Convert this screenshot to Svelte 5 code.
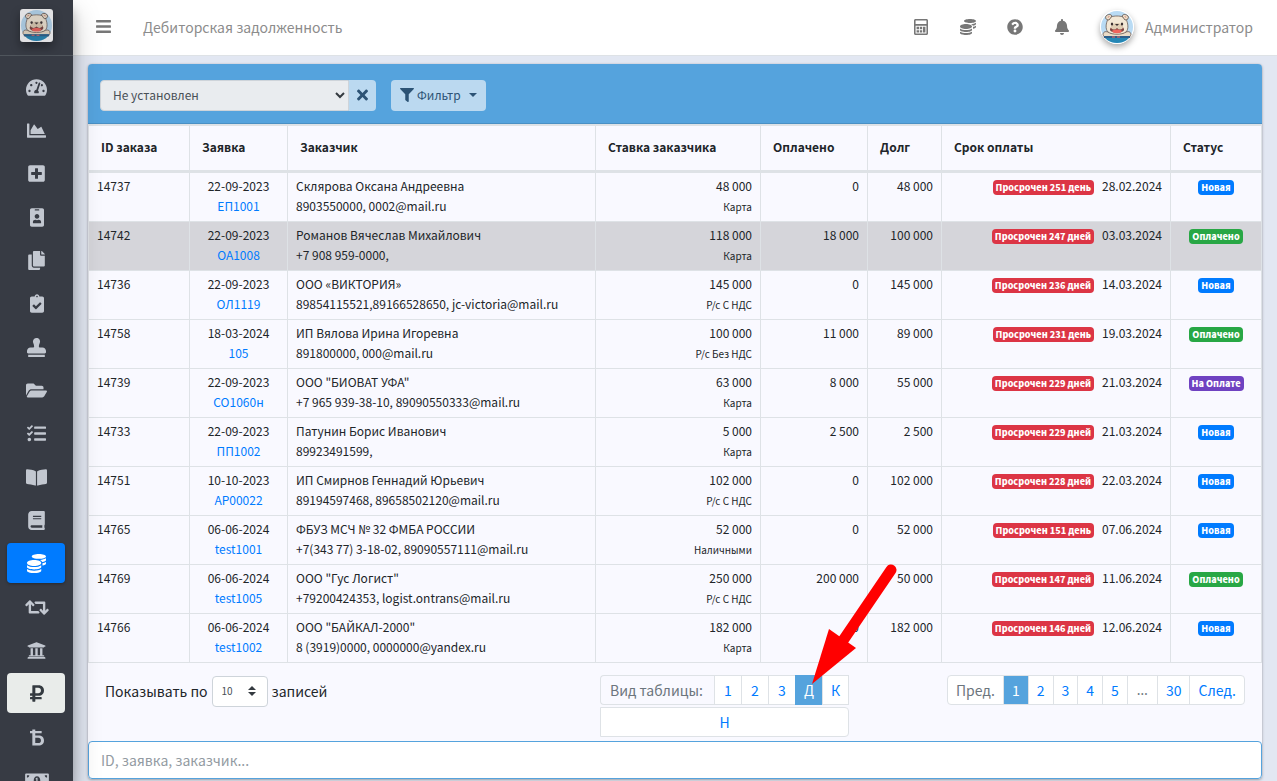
<script>
	let status = 'Не установлен';
	let perPage = '10';
	let search = '';

	const icons = {
		gauge: [576, 'M288 32C128.94 32 0 160.94 0 320c0 52.8 14.25 102.26 39.06 144.8 5.61 9.62 16.3 15.2 27.44 15.2h443c11.14 0 21.83-5.58 27.44-15.2C561.75 422.26 576 372.8 576 320c0-159.06-128.94-288-288-288zm0 64c14.71 0 26.58 10.13 30.32 23.65-1.11 2.26-2.64 4.23-3.45 6.67l-9.22 27.67c-5.13 3.49-10.97 6.01-17.64 6.01-17.67 0-32-14.33-32-32S270.33 96 288 96zM96 384c-17.67 0-32-14.33-32-32s14.33-32 32-32 32 14.33 32 32-14.33 32-32 32zm48-160c-17.67 0-32-14.33-32-32s14.33-32 32-32 32 14.33 32 32-14.33 32-32 32zm246.77-72.41l-61.33 184C343.13 347.33 352 364.54 352 384c0 11.72-3.38 22.55-8.88 32H232.88c-5.5-9.45-8.88-20.28-8.88-32 0-33.94 26.5-61.43 59.9-63.59l61.34-184.01c4.17-12.56 17.73-19.45 30.36-15.17 12.57 4.19 19.35 17.79 15.17 30.36zm14.66 57.2l15.52-46.55c3.47-1.29 7.13-2.23 11.05-2.23 17.67 0 32 14.33 32 32s-14.33 32-32 32c-11.38-.01-20.89-6.28-26.57-15.22zM480 384c-17.67 0-32-14.33-32-32s14.33-32 32-32 32 14.33 32 32-14.33 32-32 32z'],
		chart: [512, 'M500 384c6.6 0 12 5.4 12 12v40c0 6.6-5.4 12-12 12H12c-6.6 0-12-5.4-12-12V76c0-6.6 5.4-12 12-12h40c6.6 0 12 5.4 12 12v308h436zM372.7 159.5L288 216l-85.3-113.7c-5.1-6.8-15.5-6.3-19.9 1L96 248v104h384l-89.9-187.8c-3.2-6.5-11.4-8.7-17.4-4.7z'],
		plus: [448, 'M400 32H48C21.5 32 0 53.5 0 80v352c0 26.5 21.5 48 48 48h352c26.5 0 48-21.5 48-48V80c0-26.5-21.5-48-48-48zm-32 252c0 6.6-5.4 12-12 12h-92v92c0 6.6-5.4 12-12 12h-56c-6.6 0-12-5.4-12-12v-92H92c-6.6 0-12-5.4-12-12v-56c0-6.6 5.4-12 12-12h92v-92c0-6.6 5.4-12 12-12h56c6.6 0 12 5.4 12 12v92h92c6.6 0 12 5.4 12 12v56z'],
		badge: [384, 'M336 0H48C21.5 0 0 21.5 0 48v416c0 26.5 21.5 48 48 48h288c26.5 0 48-21.5 48-48V48c0-26.5-21.5-48-48-48zM144 32h96c8.8 0 16 7.2 16 16s-7.2 16-16 16h-96c-8.8 0-16-7.2-16-16s7.2-16 16-16zm48 128c35.3 0 64 28.7 64 64s-28.7 64-64 64-64-28.7-64-64 28.7-64 64-64zm112 236.8c0 10.6-10 19.2-22.4 19.2H102.4C90 416 80 407.4 80 396.8v-19.2c0-31.8 30.1-57.6 67.2-57.6h5c12.3 5.1 25.7 8 39.8 8s27.6-2.9 39.8-8h5c37.1 0 67.2 25.8 67.2 57.6v19.2z'],
		copy: [448, 'M320 448v40c0 13.255-10.745 24-24 24H24c-13.255 0-24-10.745-24-24V120c0-13.255 10.745-24 24-24h72v296c0 30.879 25.121 56 56 56h168zm0-344V0H152c-13.255 0-24 10.745-24 24v368c0 13.255 10.745 24 24 24h272c13.255 0 24-10.745 24-24V128H344c-13.2 0-24-10.8-24-24zm120.971-31.029L375.029 7.029A24 24 0 0 0 358.059 0H352v96h96v-6.059a24 24 0 0 0-7.029-16.97z'],
		clipboard: [384, 'M336 64h-80c0-35.3-28.7-64-64-64s-64 28.7-64 64H48C21.5 64 0 85.5 0 112v352c0 26.5 21.5 48 48 48h288c26.5 0 48-21.5 48-48V112c0-26.5-21.5-48-48-48zM192 40c13.3 0 24 10.7 24 24s-10.7 24-24 24-24-10.7-24-24 10.7-24 24-24zm121.2 231.8l-143 141.8c-4.7 4.7-12.3 4.6-17-.1l-82.6-83.3c-4.7-4.7-4.6-12.3.1-17L99.1 285c4.7-4.7 12.3-4.6 17 .1l46 46.4 106-105.2c4.7-4.7 12.3-4.6 17 .1l28.2 28.4c4.7 4.8 4.6 12.3-.1 17z'],
		stamp: [512, 'M32 512h448v-64H32v64zm384-256h-66.56c-16.26 0-29.44-13.18-29.44-29.44v-9.46c0-27.37 8.88-53.41 21.46-77.72 9.11-17.61 12.9-38.39 9.05-60.42-6.77-38.78-38.47-70.7-77.26-77.45C212.62-9.04 160 37.33 160 96c0 14.16 3.12 27.54 8.69 39.58C182.02 164.43 192 194.7 192 226.49v.07c0 16.26-13.18 29.44-29.44 29.44H96c-53.02 0-96 42.98-96 96v32c0 17.67 14.33 32 32 32h448c17.67 0 32-14.33 32-32v-32c0-53.02-42.98-96-96-96z'],
		folder: [576, 'M572.694 292.093L500.27 416.248A63.997 63.997 0 0 1 444.989 448H45.025c-18.523 0-30.064-20.093-20.731-36.093l72.424-124.155A64 64 0 0 1 152 256h399.964c18.523 0 30.064 20.093 20.73 36.093zM152 224h328v-48c0-26.51-21.49-48-48-48H272l-64-64H48C21.49 64 0 85.49 0 112v278.046l69.077-118.418C86.214 242.25 117.989 224 152 224z'],
		tasks: [512, 'M139.61 35.5a12 12 0 0 0-17 0L58.93 98.81l-22.7-22.12a12 12 0 0 0-17 0L3.53 92.41a12 12 0 0 0 0 17l47.59 47.4a12.78 12.78 0 0 0 17.61 0l15.59-15.62L156.52 69a12.09 12.09 0 0 0 .09-17zm0 159.19a12 12 0 0 0-17 0l-63.68 63.72-22.7-22.1a12 12 0 0 0-17 0L3.53 252a12 12 0 0 0 0 17L51 316.5a12.77 12.77 0 0 0 17.6 0l15.7-15.69 72.2-72.22a12 12 0 0 0 .09-16.9zM64 368c-26.49 0-48.59 21.5-48.59 48S37.53 464 64 464a48 48 0 0 0 0-96zm432 16H208a16 16 0 0 0-16 16v32a16 16 0 0 0 16 16h288a16 16 0 0 0 16-16v-32a16 16 0 0 0-16-16zm0-320H208a16 16 0 0 0-16 16v32a16 16 0 0 0 16 16h288a16 16 0 0 0 16-16V80a16 16 0 0 0-16-16zm0 160H208a16 16 0 0 0-16 16v32a16 16 0 0 0 16 16h288a16 16 0 0 0 16-16v-32a16 16 0 0 0-16-16z'],
		bookOpen: [576, 'M542.22 32.05c-54.8 3.11-163.72 14.43-230.96 55.59-4.64 2.84-7.27 7.89-7.27 13.17v363.87c0 11.55 12.63 18.85 23.28 13.49 69.18-34.82 169.23-44.32 218.7-46.92 16.89-.89 30.02-14.43 30.02-30.66V62.75c.01-17.71-15.35-31.74-33.77-30.7zM264.73 87.64C197.5 46.48 88.58 35.17 33.78 32.05 15.36 31.01 0 45.04 0 62.75V400.6c0 16.24 13.13 29.78 30.02 30.66 49.49 2.6 149.59 12.11 218.77 46.95 10.62 5.35 23.21-1.94 23.21-13.46V100.63c0-5.29-2.62-10.14-7.27-12.99z'],
		book: [448, 'M448 360V24c0-13.3-10.7-24-24-24H96C43 0 0 43 0 96v320c0 53 43 96 96 96h328c13.3 0 24-10.7 24-24v-16c0-7.5-3.5-14.3-8.9-18.7-4.2-15.4-4.2-59.3 0-74.7 5.4-4.3 8.9-11.1 8.9-18.6zM128 134c0-3.3 2.7-6 6-6h212c3.3 0 6 2.7 6 6v20c0 3.3-2.7 6-6 6H134c-3.3 0-6-2.7-6-6v-20zm0 64c0-3.3 2.7-6 6-6h212c3.3 0 6 2.7 6 6v20c0 3.3-2.7 6-6 6H134c-3.3 0-6-2.7-6-6v-20zm253.4 250H96c-17.7 0-32-14.3-32-32 0-17.6 14.4-32 32-32h285.4c-1.9 17.1-1.9 46.9 0 64z'],
		coins: [512, 'M0 405.3V448c0 35.3 86 64 192 64s192-28.7 192-64v-42.7C342.7 434.4 267.2 448 192 448S41.3 434.4 0 405.3zM320 128c106 0 192-28.7 192-64S426 0 320 0 128 28.7 128 64s86 64 192 64zM0 300.4V352c0 35.3 86 64 192 64s192-28.7 192-64v-51.6c-41.3 34-116.9 51.6-192 51.6S41.3 334.4 0 300.4zm416 11c57.3-11.1 96-31.7 96-55.4v-42.7c-23.2 16.4-57.3 27.6-96 34.5v63.6zM192 160C86 160 0 195.8 0 240s86 80 192 80 192-35.8 192-80-86-80-192-80zm219.3 56.3c60-10.8 100.7-32 100.7-56.3v-42.7c-35.5 25.1-96.5 38.6-160.7 41.8 29.5 14.3 51.2 33.5 60 57.2z'],
		retweet: [640, 'M629.657 343.598L528.971 444.284c-9.373 9.372-24.568 9.372-33.941 0L394.343 343.598c-9.373-9.373-9.373-24.569 0-33.941l10.823-10.823c9.562-9.562 25.133-9.34 34.419.492L480 342.118V160H292.451a24.005 24.005 0 0 1-16.971-7.029l-16-16C244.361 121.851 255.069 96 276.451 96H520c13.255 0 24 10.745 24 24v222.118l40.416-42.792c9.285-9.831 24.856-10.054 34.419-.492l10.823 10.823c9.372 9.372 9.372 24.569-.001 33.941zm-265.138 15.431A23.999 23.999 0 0 0 347.548 352H160V169.881l40.416 42.792c9.286 9.831 24.856 10.054 34.419.491l10.822-10.822c9.373-9.373 9.373-24.569 0-33.941L144.971 67.716c-9.373-9.373-24.569-9.373-33.941 0L10.343 168.402c-9.373 9.373-9.373 24.569 0 33.941l10.822 10.822c9.562 9.562 25.133 9.34 34.419-.491L96 169.881V392c0 13.255 10.745 24 24 24h243.549c21.382 0 32.09-25.851 16.971-40.971l-16.001-16z'],
		bank: [512, 'M496 128v16a8 8 0 0 1-8 8h-24v12c0 6.627-5.373 12-12 12H60c-6.627 0-12-5.373-12-12v-12H24a8 8 0 0 1-8-8v-16a8 8 0 0 1 4.941-7.392l232-88a7.996 7.996 0 0 1 6.118 0l232 88A8 8 0 0 1 496 128zm-24 304H40c-13.255 0-24 10.745-24 24v16a8 8 0 0 0 8 8h464a8 8 0 0 0 8-8v-16c0-13.255-10.745-24-24-24zM96 192v192H60c-6.627 0-12 5.373-12 12v20h416v-20c0-6.627-5.373-12-12-12h-36V192h-64v192h-64V192h-64v192h-64V192H96z'],
		ruble: [384, 'M239.36 320C324.48 320 384 260.542 384 175.071S324.48 32 239.36 32H76c-6.627 0-12 5.373-12 12v206.632H12c-6.627 0-12 5.373-12 12V308c0 6.627 5.373 12 12 12h52v32H12c-6.627 0-12 5.373-12 12v40c0 6.627 5.373 12 12 12h52v52c0 6.627 5.373 12 12 12h58.56c6.627 0 12-5.373 12-12v-52H308c6.627 0 12-5.373 12-12v-40c0-6.627-5.373-12-12-12H146.56v-32h92.8zm-92.8-219.252h78.72c46.72 0 74.88 29.11 74.88 74.323 0 45.832-28.16 75.561-76.16 75.561h-77.44V100.748z'],
		yat: [384, 'M64 36h80v44h176v62H144v58h90c92 0 150 50 150 138s-58 138-150 138H64V142H0V80h64zM144 266v144h84c44 0 72-24 72-72s-28-72-72-72z'],
		money: [640, 'M608 64H32C14 64 0 78 0 96v320c0 18 14 32 32 32h576c18 0 32-14 32-32V96c0-18-14-32-32-32zM48 400v-64c35 0 64 29 64 64zm0-224v-64h64c0 35-29 64-64 64zm272 192c-53 0-88-50-88-112s35-112 88-112 88 50 88 112-35 112-88 112zm-34-62v28h68v-28h-20V180h-24c-6 12-16 18-28 20v24h20v82zm306 94h-64c0-35 29-64 64-64zm0-224c-35 0-64-29-64-64h64z'],
		bars: [448, 'M16 132h416c9 0 16-7 16-16V76c0-9-7-16-16-16H16C7 60 0 67 0 76v40c0 9 7 16 16 16zm0 160h416c9 0 16-7 16-16v-40c0-9-7-16-16-16H16c-9 0-16 7-16 16v40c0 9 7 16 16 16zm0 160h416c9 0 16-7 16-16v-40c0-9-7-16-16-16H16c-9 0-16 7-16 16v40c0 9 7 16 16 16z'],
		calculator: [448, 'M400 0H48C22 0 0 22 0 48v416c0 26 22 48 48 48h352c26 0 48-22 48-48V48c0-26-22-48-48-48zM50 50h348v110H50zm0 166h348v246H50zM82 246h78v78H82zm103 0h78v78h-78zm103 0h78v188h-78zM82 356h78v78H82zm103 0h78v78h-78z'],
		help: [512, 'M504 256c0 136.997-111.043 248-248 248S8 392.997 8 256C8 119.083 119.043 8 256 8s248 111.083 248 248zM262.655 90c-54.497 0-89.255 22.957-116.549 63.758-3.536 5.286-2.353 12.415 2.715 16.258l34.699 26.31c5.205 3.947 12.621 3.008 16.665-2.122 17.864-22.658 30.113-35.797 57.303-35.797 20.429 0 45.698 13.148 45.698 32.958 0 14.976-12.363 22.667-32.534 33.976C247.128 238.528 216 254.941 216 296v4c0 6.627 5.373 12 12 12h56c6.627 0 12-5.373 12-12v-1.333c0-28.462 83.186-29.647 83.186-106.667 0-58.002-60.165-102-116.531-102zM256 338c-25.365 0-46 20.635-46 46 0 25.364 20.635 46 46 46s46-20.636 46-46c0-25.365-20.635-46-46-46z'],
		bell: [448, 'M224 512c35.32 0 63.97-28.65 63.97-64H160.03c0 35.35 28.65 64 63.97 64zm215.39-149.71c-19.32-20.76-55.47-51.99-55.47-154.29 0-77.7-54.48-139.9-127.94-155.16V32c0-17.67-14.32-32-31.98-32s-31.98 14.33-31.98 32v20.84C118.56 68.1 64.08 130.3 64.08 208c0 102.3-36.15 133.53-55.47 154.29-6 6.45-8.66 14.16-8.61 21.71.11 16.4 12.98 32 32.1 32h383.8c19.12 0 32-15.6 32.1-32 .05-7.55-2.61-15.27-8.61-21.71z'],
		times: [352, 'M242.72 256l100.07-100.07c12.28-12.28 12.28-32.19 0-44.48l-22.24-22.24c-12.28-12.28-32.19-12.28-44.48 0L176 189.28 75.93 89.21c-12.28-12.28-32.19-12.28-44.48 0L9.21 111.45c-12.28 12.28-12.28 32.19 0 44.48L109.28 256 9.21 356.07c-12.28 12.28-12.28 32.19 0 44.48l22.24 22.24c12.28 12.28 32.2 12.28 44.48 0L176 322.72l100.07 100.07c12.28 12.28 32.2 12.28 44.48 0l22.24-22.24c12.28-12.28 12.28-32.19 0-44.48L242.72 256z'],
		filter: [512, 'M487.976 0H24.028C2.71 0-8.047 25.866 7.058 40.971L192 225.941V432c0 7.831 3.821 15.17 10.237 19.662l80 55.98C298.02 518.69 320 507.493 320 487.98V225.941l184.947-184.97C520.021 25.896 509.338 0 487.976 0z']
	};

	const menu = [
		{ icon: 'gauge', name: 'Панель' },
		{ icon: 'chart', name: 'Графики' },
		{ icon: 'plus', name: 'Добавить' },
		{ icon: 'badge', name: 'Контакты' },
		{ icon: 'copy', name: 'Документы' },
		{ icon: 'clipboard', name: 'Заявки' },
		{ icon: 'stamp', name: 'Печати' },
		{ icon: 'folder', name: 'Файлы' },
		{ icon: 'tasks', name: 'Задачи' },
		{ icon: 'bookOpen', name: 'Справочник' },
		{ icon: 'book', name: 'Журнал' },
		{ icon: 'coins', name: 'Задолженность', state: 'active' },
		{ icon: 'retweet', name: 'Обмен' },
		{ icon: 'bank', name: 'Банк' },
		{ icon: 'ruble', name: 'Оплата', state: 'open' },
		{ icon: 'yat', name: 'Тарифы' },
		{ icon: 'money', name: 'Касса' }
	];

	const tools = [
		{ icon: 'calculator', name: 'Калькулятор' },
		{ icon: 'coins', name: 'Финансы' },
		{ icon: 'help', name: 'Помощь' },
		{ icon: 'bell', name: 'Уведомления' }
	];

	const colors = { 'Новая': 'blue', 'Оплачено': 'green', 'На Оплате': 'purple' };

	const orders = [
		{ id: 14737, date: '22-09-2023', num: 'ЕП1001', client: 'Склярова Оксана Андреевна', contacts: '8903550000, 0002@mail.ru', rate: '48 000', pay: 'Карта', paid: '0', debt: '48 000', late: '251 день', due: '28.02.2024', status: 'Новая' },
		{ id: 14742, date: '22-09-2023', num: 'ОА1008', client: 'Романов Вячеслав Михайлович', contacts: '+7 908 959-0000,', rate: '118 000', pay: 'Карта', paid: '18 000', debt: '100 000', late: '247 дней', due: '03.03.2024', status: 'Оплачено', hover: true },
		{ id: 14736, date: '22-09-2023', num: 'ОЛ1119', client: 'ООО «ВИКТОРИЯ»', contacts: '89854115521,89166528650, jc-victoria@mail.ru', rate: '145 000', pay: 'Р/с С НДС', paid: '0', debt: '145 000', late: '236 дней', due: '14.03.2024', status: 'Новая' },
		{ id: 14758, date: '18-03-2024', num: '105', client: 'ИП Вялова Ирина Игоревна', contacts: '891800000, 000@mail.ru', rate: '100 000', pay: 'Р/с Без НДС', paid: '11 000', debt: '89 000', late: '231 день', due: '19.03.2024', status: 'Оплачено' },
		{ id: 14739, date: '22-09-2023', num: 'СО1060н', client: 'ООО "БИОВАТ УФА"', contacts: '+7 965 939-38-10, 89090550333@mail.ru', rate: '63 000', pay: 'Карта', paid: '8 000', debt: '55 000', late: '229 дней', due: '21.03.2024', status: 'На Оплате' },
		{ id: 14733, date: '22-09-2023', num: 'ПП1002', client: 'Патунин Борис Иванович', contacts: '89923491599,', rate: '5 000', pay: 'Карта', paid: '2 500', debt: '2 500', late: '229 дней', due: '21.03.2024', status: 'Новая' },
		{ id: 14751, date: '10-10-2023', num: 'АР00022', client: 'ИП Смирнов Геннадий Юрьевич', contacts: '89194597468, 89658502120@mail.ru', rate: '102 000', pay: 'Р/с С НДС', paid: '0', debt: '102 000', late: '228 дней', due: '22.03.2024', status: 'Новая' },
		{ id: 14765, date: '06-06-2024', num: 'test1001', client: 'ФБУЗ МСЧ № 32 ФМБА РОССИИ', contacts: '+7(343 77) 3-18-02, 89090557111@mail.ru', rate: '52 000', pay: 'Наличными', paid: '0', debt: '52 000', late: '151 день', due: '07.06.2024', status: 'Новая' },
		{ id: 14769, date: '06-06-2024', num: 'test1005', client: 'ООО "Гус Логист"', contacts: '+79200424353, logist.ontrans@mail.ru', rate: '250 000', pay: 'Р/с С НДС', paid: '200 000', debt: '50 000', late: '147 дней', due: '11.06.2024', status: 'Оплачено' },
		{ id: 14766, date: '06-06-2024', num: 'test1002', client: 'ООО "БАЙКАЛ-2000"', contacts: '8 (3919)0000, 0000000@yandex.ru', rate: '182 000', pay: 'Карта', paid: '0', debt: '182 000', late: '146 дней', due: '12.06.2024', status: 'Новая' }
	];
</script>

{#snippet icon(name, size)}
	<svg class="icon" viewBox="0 0 {icons[name][0]} 512" width={Math.round((icons[name][0] * size) / 512)} height={size} aria-hidden="true">
		<path fill="currentColor" fill-rule="evenodd" d={icons[name][1]} />
	</svg>
{/snippet}

{#snippet dog()}
	<svg viewBox="0 0 34 34" aria-hidden="true">
		<rect width="34" height="34" fill="#fff" />
		<circle cx="17" cy="17" r="16" fill="#b9dbf4" />
		<path d="M3 25c0-3 2-4 5-3l3 1h12l3-1c3-1 5 0 5 3l-2 3H5z" fill="#eadcc8" stroke="#5b4a44" stroke-width=".7" />
		<path d="M8 9c1-2 5-3 9-3s8 1 9 3c2 4 3 10 0 13-4 3-14 3-18 0-3-3-2-9 0-13z" fill="#f3e8d6" stroke="#5b4a44" stroke-width=".7" />
		<path d="M9 10C6 10 5 8 6 6c2-2 5-2 6 0zm16 0c3 0 4-2 3-4-2-2-5-2-6 0z" fill="#efe2cd" stroke="#5b4a44" stroke-width=".8" />
		<path d="M8 8c-1-1 0-2 2-2zm18 0c1-1 0-2-2-2z" fill="#d58678" />
		<path d="M10 19c1-3 4-5 7-5s6 2 7 5c1 5-15 5-14 0z" fill="#7d4440" />
		<path d="M12 21c2-2 8-2 10 0-1 3-9 3-10 0z" fill="#f0645c" />
		<path d="M11 18c0-3 3-5 6-5s6 2 6 5c-2 2-4 2-6 0-2 2-4 2-6 0z" fill="#dfcdb4" />
		<path d="M15 14h4l-2 2z" fill="#3b3032" />
		<ellipse cx="12" cy="14" rx="1.2" ry="1.5" fill="#3b3032" />
		<ellipse cx="22" cy="14" rx="1.2" ry="1.5" fill="#3b3032" />
		<path d="M4 26h26l-3 4c-6 4-14 4-20 0z" fill="#2587b5" />
		<path d="M4 26h26v2H4z" fill="#2f5f8a" />
		<path d="M12 27h3m2 0h3" stroke="#ef6c65" />
	</svg>
{/snippet}

<div class="wrapper">
	<aside class="sidebar">
		<a href="#home" class="brand" aria-label="Главная">{@render dog()}</a>
		<nav>
			<ul>
				{#each menu as item}
					<li><a href="#{item.icon}" class={item.state} aria-label={item.name}>{@render icon(item.icon, 19)}</a></li>
				{/each}
			</ul>
		</nav>
	</aside>

	<div class="page">
		<header class="topbar">
			<button type="button" class="toggle" aria-label="Меню">{@render icon('bars', 17)}</button>
			<a href="#debts" class="title">Дебиторская задолженность</a>
			<div class="tools">
				{#each tools as tool}
					<button type="button" aria-label={tool.name}>{@render icon(tool.icon, 16)}</button>
				{/each}
			</div>
			<a href="#user" class="user"><span class="avatar">{@render dog()}</span>Администратор</a>
		</header>

		<main>
			<div class="card">
				<div class="card-header">
					<div class="group">
						<div class="select">
							<select bind:value={status} aria-label="Статус">
								<option>Не установлен</option>
							</select>
							<svg viewBox="0 0 10 8" width="10" height="8" aria-hidden="true"><path d="M1 2l4 4 4-4" fill="none" stroke="#343a40" stroke-width="2" /></svg>
						</div>
						<button type="button" class="btn-clear" aria-label="Сбросить">{@render icon('times', 16)}</button>
					</div>
					<button type="button" class="btn-filter">{@render icon('filter', 14)}<span>Фильтр</span><i class="caret"></i></button>
				</div>

				<table>
					<colgroup>
						<col class="c-id" />
						<col class="c-num" />
						<col />
						<col class="c-rate" />
						<col class="c-paid" />
						<col class="c-debt" />
						<col class="c-due" />
						<col class="c-status" />
					</colgroup>
					<thead>
						<tr>
							<th>ID заказа</th>
							<th>Заявка</th>
							<th>Заказчик</th>
							<th>Ставка заказчика</th>
							<th>Оплачено</th>
							<th>Долг</th>
							<th>Срок оплаты</th>
							<th>Статус</th>
						</tr>
					</thead>
					<tbody>
						{#each orders as order}
							<tr class:hover={order.hover}>
								<td>{order.id}</td>
								<td class="center">{order.date}<br /><a href="#{order.num}">{order.num}</a></td>
								<td>{order.client}<br />{order.contacts}</td>
								<td class="right">{order.rate}<br /><small>{order.pay}</small></td>
								<td class="right">{order.paid}</td>
								<td class="right">{order.debt}</td>
								<td class="right"><span class="badge red">Просрочен {order.late}</span>{order.due}</td>
								<td class="center"><span class="badge {colors[order.status]}">{order.status}</span></td>
							</tr>
						{/each}
					</tbody>
				</table>

				<div class="footer">
					<label class="length">
						Показывать по
						<span class="select-sm">
							<select bind:value={perPage}>
								<option>10</option>
							</select>
							<svg viewBox="0 0 8 10" width="8" height="10" aria-hidden="true"><path d="M4 0l4 4H0zm0 10L0 6h8z" fill="#343a40" /></svg>
						</span>
						записей
					</label>

					<div class="views">
						<span class="views-title">Вид таблицы:</span>
						<button type="button">1</button>
						<button type="button">2</button>
						<button type="button">3</button>
						<button type="button" class="current">
							Д
							<svg class="pointer" viewBox="0 0 90 124" width="90" height="124" aria-hidden="true">
								<path d="M83 8L34 80" stroke="#f00" stroke-width="11" stroke-linecap="round" />
								<path d="M4 122L21 67l27 19z" fill="#f00" />
							</svg>
						</button>
						<button type="button">К</button>
						<button type="button" class="last">Н</button>
					</div>

					<ul class="pages">
						<li><span>Пред.</span></li>
						<li><a href="#1" class="current">1</a></li>
						<li><a href="#2">2</a></li>
						<li><a href="#3">3</a></li>
						<li><a href="#4">4</a></li>
						<li><a href="#5">5</a></li>
						<li><span class="dots">…</span></li>
						<li><a href="#30">30</a></li>
						<li><a href="#next">След.</a></li>
					</ul>
				</div>

				<input class="search" type="text" placeholder="ID, заявка, заказчик..." aria-label="Поиск" bind:value={search} />
			</div>
		</main>
	</div>
</div>

<style>
	:global(body) {
		background: #e2e7f2;
		overflow: hidden;
	}

	* {
		box-sizing: border-box;
	}

	.wrapper {
		display: flex;
		height: 100vh;
		overflow: hidden;
		font-family: 'Noto Sans CJK SC', 'Noto Sans', sans-serif;
		font-size: 12px;
		line-height: 20px;
		color: #212529;
	}

	button,
	select,
	input {
		font: inherit;
		margin: 0;
	}

	button {
		cursor: pointer;
	}

	a {
		color: #007bff;
		text-decoration: none;
	}

	ul {
		list-style: none;
		margin: 0;
		padding: 0;
	}

	.icon {
		display: block;
		flex: none;
	}

	/* Боковое меню */
	.sidebar {
		flex: none;
		width: 73px;
		background: #373b44;
		box-shadow: 0 14px 28px rgba(0, 0, 0, 0.25), 0 10px 10px rgba(0, 0, 0, 0.22);
		z-index: 2;
	}

	.brand {
		display: flex;
		justify-content: center;
		height: 56px;
		padding-top: 9px;
		border-bottom: 1px solid #4f555c;
	}

	.brand svg {
		width: 33px;
		height: 33px;
		border-radius: 3px;
		opacity: 0.85;
		box-shadow: 0 5px 10px rgba(0, 0, 0, 0.4);
	}

	.sidebar ul {
		padding: 11px 8px 0 7px;
	}

	.sidebar li {
		margin-bottom: 3px;
	}

	.sidebar li:nth-child(3n) {
		margin-bottom: 4px;
	}

	.sidebar li a {
		display: flex;
		align-items: center;
		justify-content: center;
		height: 40px;
		padding-left: 1px;
		border-radius: 4px;
		color: #c2c7d0;
	}

	.sidebar li a.active {
		background: #007bff;
		color: #fff;
		box-shadow: 0 1px 3px rgba(0, 0, 0, 0.3);
	}

	.sidebar li a.open {
		background: #e9ecea;
		color: #343a40;
	}

	.page {
		flex: 1;
		min-width: 0;
	}

	.topbar {
		display: flex;
		align-items: center;
		height: 56px;
		padding: 0 24px 2px 23px;
		background: #fff;
		border-bottom: 1px solid #dee2e6;
		font-size: 14px;
		color: #808080;
	}

	.topbar button {
		display: flex;
		justify-content: center;
		border: 0;
		padding: 0;
		background: none;
		color: #777;
	}

	.topbar a {
		color: #8c8c8c;
	}

	.title {
		margin-left: 32px;
	}

	.tools {
		display: flex;
		margin-left: auto;
		margin-right: 15px;
	}

	.tools button {
		width: 47px;
	}

	.user {
		display: flex;
		align-items: center;
		gap: 11px;
	}

	.avatar svg {
		display: block;
		width: 34px;
		height: 34px;
		border-radius: 50%;
		box-shadow: 0 3px 6px rgba(0, 0, 0, 0.35);
	}

	main {
		padding: 8px 15px 0;
	}

	.card {
		border-radius: 4px;
		background: #f9f9ff;
		box-shadow: 0 0 1px rgba(0, 0, 0, 0.2), 0 1px 3px rgba(0, 0, 0, 0.3);
	}

	.card-header {
		display: flex;
		align-items: center;
		gap: 15px;
		height: 60px;
		padding: 3px 12px 0;
		background: #55a3dd;
		border-bottom: 1px solid #4a90c4;
		border-radius: 4px 4px 0 0;
	}

	.group {
		display: flex;
		height: 31px;
	}

	.select,
	.select-sm {
		position: relative;
		display: inline-flex;
	}

	.select svg,
	.select-sm svg {
		position: absolute;
		top: 0;
		bottom: 0;
		margin: auto;
		pointer-events: none;
	}

	.select svg {
		right: 4px;
	}

	.select-sm svg {
		right: 12px;
	}

	select {
		appearance: none;
		border: 1px solid #ced4da;
		color: #495057;
	}

	.select select {
		width: 249px;
		padding: 0 12px;
		border-radius: 4px 0 0 4px;
		background: #e9ecef;
	}

	.btn-clear,
	.btn-filter {
		display: flex;
		align-items: center;
		border: 0;
		background: #bbd9f0;
		color: #2c5375;
	}

	.btn-clear {
		width: 27px;
		padding: 0;
		justify-content: center;
		border-radius: 0 4px 4px 0;
	}

	.btn-filter {
		height: 31px;
		gap: 3px;
		padding: 0 9px;
		border-radius: 4px;
	}

	.caret {
		margin-left: 5px;
		border: 4px solid transparent;
		border-top-color: currentColor;
		border-bottom: 0;
	}

	table {
		width: 100%;
		table-layout: fixed;
		border-spacing: 0;
		border-left: 1px solid #dee2e6;
		border-top: 2px solid #dee2e6;
	}

	.c-id {
		width: 101px;
	}

	.c-num {
		width: 98px;
	}

	.c-rate {
		width: 165px;
	}

	.c-paid {
		width: 107px;
	}

	.c-debt {
		width: 74px;
	}

	.c-due {
		width: 229px;
	}

	.c-status {
		width: 91px;
	}

	th {
		height: 47px;
		padding: 0 12px 2px;
		text-align: left;
		border-right: 1px solid #dee2e6;
		border-bottom: 3px solid #dee2e6;
	}

	td {
		height: 49px;
		padding: 3px 8px 5px;
		vertical-align: top;
		white-space: nowrap;
		border-right: 1px solid #dee2e6;
		border-bottom: 1px solid #dee2e6;
	}

	tr.hover td {
		background: #d5d5da;
	}

	.center {
		text-align: center;
	}

	.right {
		text-align: right;
	}

	small {
		font-size: 10px;
		line-height: 10px;
	}

	.badge {
		display: inline-block;
		padding: 0 3px;
		border-radius: 4px;
		font-size: 9px;
		font-weight: 900;
		line-height: 15px;
		color: #fff;
	}

	.red {
		margin-right: 8px;
		background: #dc3545;
	}

	.blue {
		background: #007bff;
	}

	.green {
		background: #28a745;
	}

	.purple {
		background: #6f42c1;
	}

	.footer {
		display: grid;
		grid-template-columns: 5fr 249px 4fr;
		align-items: start;
		height: 78px;
		padding: 12px 17px 0;
		font-size: 14px;
	}

	.length {
		display: flex;
		align-items: center;
		gap: 4px;
		height: 32px;
	}

	.select-sm select {
		width: 56px;
		height: 31px;
		padding: 0 9px;
		border-radius: 4px;
		background: #fff;
		font-size: 10px;
	}

	.views {
		display: flex;
		flex-wrap: wrap;
		row-gap: 2px;
	}

	.views-title {
		flex: 1;
		height: 30px;
		padding: 4px 0 0 9px;
		border: 1px solid #dee2e6;
		border-right: 0;
		border-radius: 4px 0 0 4px;
		color: #6c757d;
	}

	.views button {
		width: 27px;
		height: 30px;
		padding: 0;
		border: 1px solid #dee2e6;
		border-right: 0;
		background: #fff;
		color: #007bff;
	}

	.views button:nth-last-child(2) {
		border-right: 1px solid #dee2e6;
	}

	.views .last {
		width: 100%;
		border-right: 1px solid #dee2e6;
		border-radius: 0 4px 4px 0;
	}

	.views .current {
		position: relative;
		border-color: #55a3dd;
		background: #55a3dd;
		color: #fff;
	}

	/* Стрелка поверх таблицы */
	.pointer {
		position: absolute;
		right: -76px;
		bottom: 18px;
		fill: none;
		pointer-events: none;
		z-index: 1;
	}

	.pages {
		display: flex;
		justify-self: end;
		border: 1px solid #dee2e6;
		border-radius: 4px;
		background: #fff;
	}

	.pages a,
	.pages span {
		display: block;
		height: 28px;
		padding: 4px 8px;
		color: #007bff;
	}

	.pages li + li {
		border-left: 1px solid #dee2e6;
	}

	.pages span {
		color: #6c757d;
	}

	.pages .dots {
		padding: 4px 9px;
		font-family: 'Noto Sans', sans-serif;
	}

	.pages .current {
		background: #55a3dd;
		color: #fff;
	}

	.search {
		display: block;
		width: 100%;
		height: 38px;
		padding: 0 12px;
		border: 1px solid #55a3dd;
		border-radius: 4px;
		background: #fff;
		font-size: 14px;
		color: #495057;
	}

	.search::placeholder {
		color: #939ba2;
	}
</style>
